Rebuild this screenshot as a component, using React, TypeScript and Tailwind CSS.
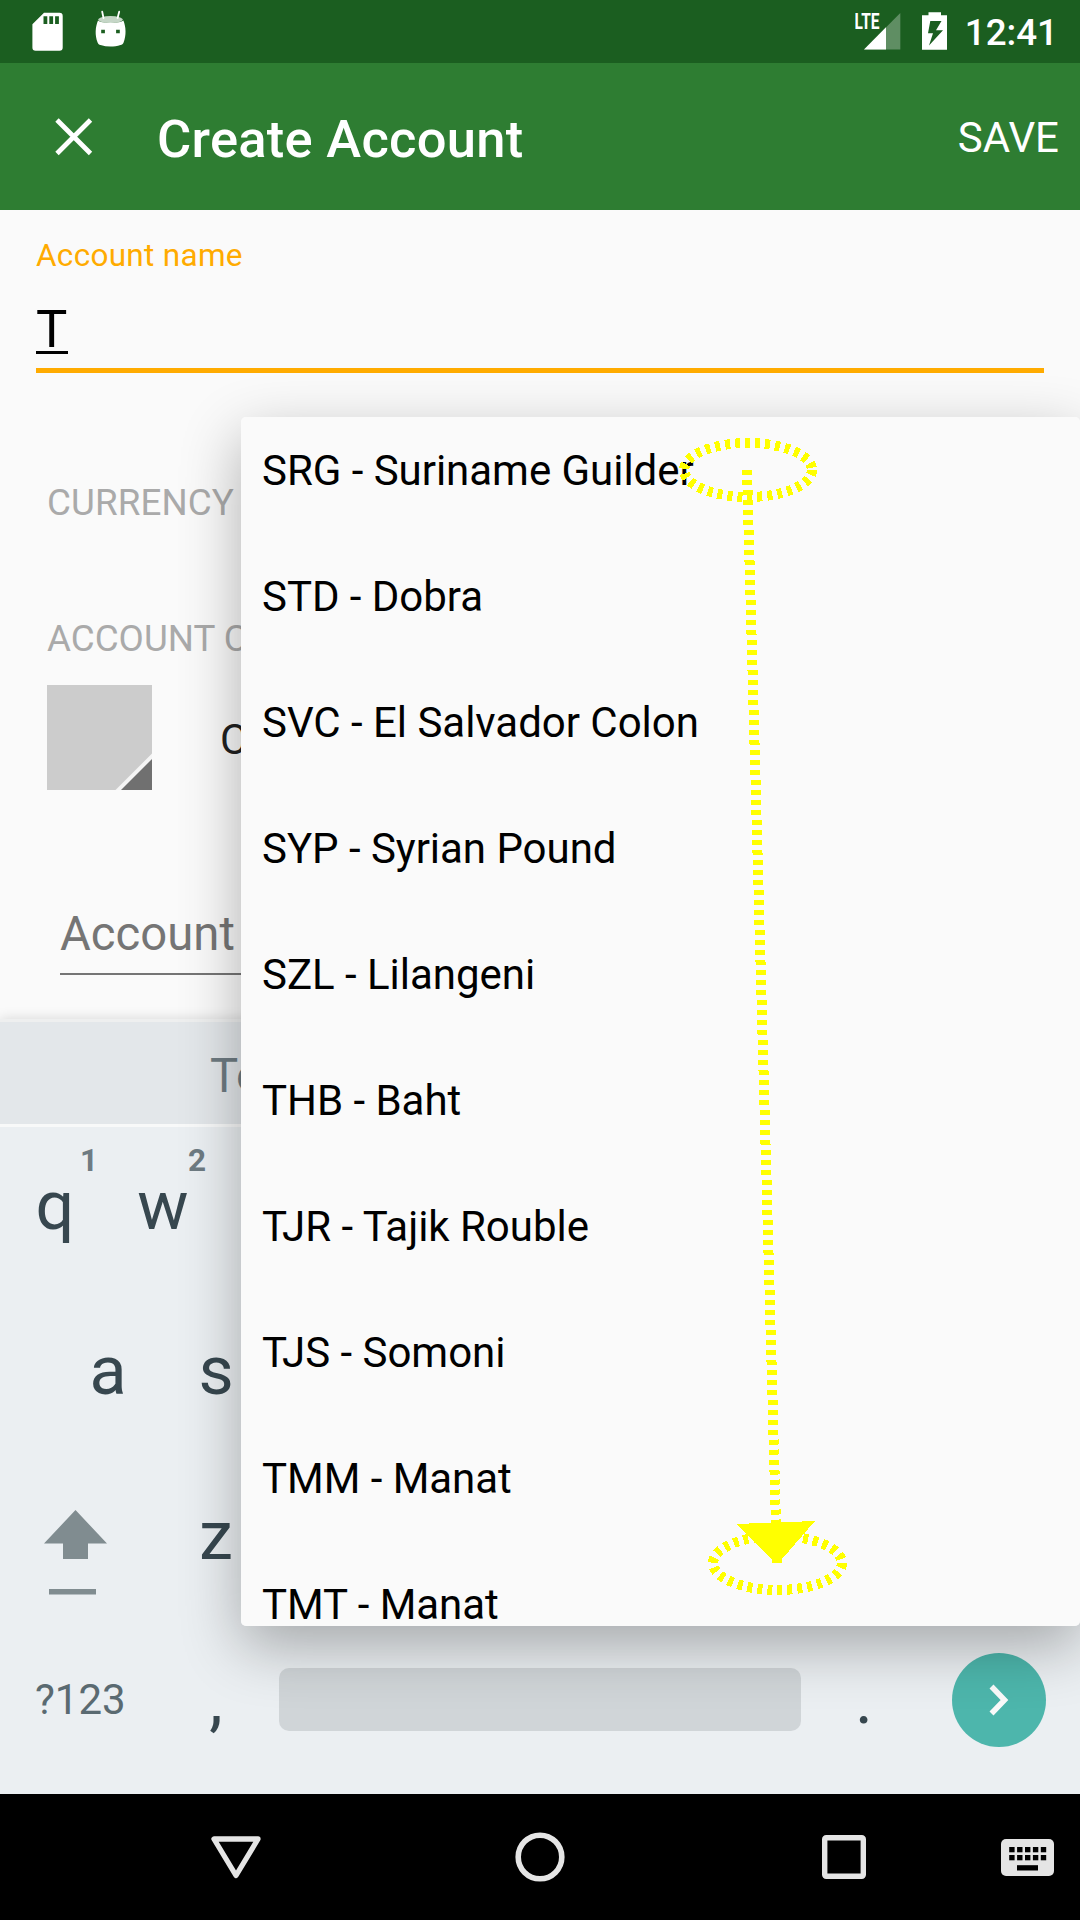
import React from "react";

const currencies = [
  "SRG - Suriname Guilder",
  "STD - Dobra",
  "SVC - El Salvador Colon",
  "SYP - Syrian Pound",
  "SZL - Lilangeni",
  "THB - Baht",
  "TJR - Tajik Rouble",
  "TJS - Somoni",
  "TMM - Manat",
  "TMT - Manat",
];

function StatusBar() {
  return (
    <div className="flex h-[63px] shrink-0 items-center bg-[#1b5e20] pl-8 pr-[22px] text-white">
      <svg className="h-[63px] w-[32px]" viewBox="32 0 32 63" fill="currentColor">
        <path
          fillRule="evenodd"
          d="M44 12.700H59.500a3.200 3.200 0 0 1 3.200 3.200V47.500a3.200 3.200 0 0 1-3.200 3.200H35.600a3.200 3.200 0 0 1-3.200-3.200V24.200ZM43.500 16.300V24h3.800V16.300ZM49.300 16.300V24h3.800V16.300ZM55.100 16.300V24h3.800V16.300Z"
        />
      </svg>
      <svg className="ml-[30px] h-[63px] w-[34px]" viewBox="94 0 34 63" fill="currentColor">
        <path d="M102.200 11.700 103.500 18M119.200 11.700 117.600 18" stroke="currentColor" strokeWidth="1.800" strokeLinecap="round" />
        <path fillRule="evenodd" d="M98 20.500C101 23.600 120 23.600 123.400 20.500C126 27 126.500 35 123.600 42.500C123 44 122 44.700 120.500 45C114 47 107 47 100.500 45C99 44.700 98.200 44 97.600 42.500C94.700 35 95.300 27 98 20.500ZM101.200 29.800V33.200H104.900V29.800ZM116.100 29.800V33.200H119.800V29.800Z" />
        <ellipse cx="110.500" cy="19.600" rx="12.300" ry="3.500" opacity=".75" />
      </svg>
      <svg className="ml-auto h-[63px] w-[46px]" viewBox="855 0 46 63" fill="currentColor">
        <path d="M864 49.500 900.300 13V49.500Z" opacity=".3" />
        <path d="M864 49.500 886 27.300V49.500Z" />
        <text x="854.500" y="29" fontFamily="Roboto" fontWeight="700" fontSize="21.500" textLength="25" lengthAdjust="spacingAndGlyphs">LTE</text>
      </svg>
      <svg className="ml-[20px] h-[63px] w-[27px]" viewBox="921 0 27 63" fill="currentColor">
        <path fillRule="evenodd" d="M928.500 12.200H941V15.200H947V49.700H922V15.200H928.500ZM930.300 21 928 33.300H933L929 45.500 943 30.300H936L941.500 21Z" />
      </svg>
      <span className="ml-[17px] pt-0.5 text-[36.75px] font-medium leading-[63px]">12:41</span>
    </div>
  );
}

function AppBar() {
  return (
    <div className="flex h-[147px] shrink-0 items-center bg-[#2e7d32] pl-[55px] pr-[21px] text-white">
      <svg className="h-[38px] w-[38px]" viewBox="0 0 38 38" stroke="currentColor" strokeWidth="4.800">
        <path d="M2 2 35.500 35.500M35.500 2 2 35.500" />
      </svg>
      <h1 className="ml-[64px] pt-1 text-[52.5px] font-medium leading-[60px] tracking-[0.27px]">Create Account</h1>
      <span className="ml-auto pt-0.5 text-[42px] leading-[60px]">SAVE</span>
    </div>
  );
}

function AccountForm() {
  return (
    <div className="flex h-[809px] shrink-0 flex-col bg-[#fafafa] pt-[26px]">
      <label className="ml-[36px] text-[31.5px] leading-10 tracking-[0.3px] text-[#ffab00]">Account name</label>
      <div className="mx-[36px] mt-[23px] flex h-[74px] border-b-[5px] border-[#ffab00]">
        <span className="h-[55px] w-8 border-b-[3px] border-black text-[52.5px] leading-[60px] text-black">T</span>
      </div>
      <div className="mt-[110px] pl-[47px] text-[36.75px] leading-10 tracking-[0.1px] text-[#aaaaaa]">CURRENCY</div>
      <div className="mt-24 pl-[47px] text-[36.75px] leading-10 text-[#aaaaaa]">ACCOUNT COLOR</div>
      <div className="mt-[26px] flex items-center pl-[47px]">
        <svg className="h-[105px] w-[105px]" viewBox="0 0 105 105">
          <path d="M0 0H105V105H0Z" fill="#cccccc" />
          <path d="M68.500 105 105 68.500V105Z" fill="#f5f5f5" />
          <path d="M74 105 105 74V105Z" fill="#707070" />
        </svg>
        <span className="ml-[68px] pt-[5px] text-[42px] leading-[60px] text-[#212121]">CASH</span>
      </div>
      <div className="ml-[60px] mt-[114px] h-[71px] border-b-2 border-[#757575] text-[47.25px] leading-[60px] text-[#757575]">
        Account
      </div>
    </div>
  );
}

function Key({ label, hint }: { label: string; hint?: string }) {
  return (
    <div className="relative w-[108px] text-center text-[68.25px] leading-[80px] text-[#37474f]">
      {label}
      {hint && (
        <span className="absolute -top-[25px] right-[11px] text-[31.5px] font-bold leading-10 text-[#6e7b82]">{hint}</span>
      )}
    </div>
  );
}

function Keyboard() {
  return (
    <div className="relative flex h-[775px] shrink-0 flex-col bg-[#ebeff2] shadow-[0_0_12px_rgba(0,0,0,0.15)]">
      <div className="h-[108px] border-b-[3px] border-t-[3px] border-b-[#f8f9f9] border-t-[#eeefef] bg-[#e3e7ea] pl-[210px] pt-[24px] text-[47.25px] leading-[60px] text-[#6e7b82]">
        To
      </div>
      <div className="mt-[39px] flex pl-px">
        <Key label="q" hint="1" />
        <Key label="w" hint="2" />
      </div>
      <div className="mt-[85px] flex pl-[54px]">
        <Key label="a" />
        <Key label="s" />
      </div>
      <div className="mt-[85px] flex h-20">
        <div className="w-[162px]">
          <svg className="ml-[44px] mt-[14px] h-[86px] w-[64px]" viewBox="44 1510 64 86" fill="#808c90">
            <path d="M75.500 1510 107 1543.500H88V1559H63V1543.500H44ZM49 1589H96V1594.500H49Z" />
          </svg>
        </div>
        <Key label="z" />
      </div>
      <div className="mt-[76px] flex h-[95px] items-center">
        <span className="w-[162px] pl-[35px] text-[42px] leading-[60px] text-[#5a6a71]">?123</span>
        <Key label="," />
        <div className="ml-[9px] h-[63px] w-[522px] rounded-[10px] bg-[#d0d5d8]" />
        <div className="ml-[9px]">
          <Key label="." />
        </div>
        <div className="ml-[34px] flex size-[94px] items-center justify-center rounded-full bg-[#4db6ac]">
          <svg className="h-8 w-5" viewBox="0 0 20 32" fill="none" stroke="#fafafa" strokeWidth="5.500">
            <path d="M2.500 2.500 15.500 16 2.500 29.500" />
          </svg>
        </div>
      </div>
    </div>
  );
}

function NavigationBar() {
  return (
    <div className="relative h-[126px] shrink-0 bg-black">
      <svg className="h-full w-full" viewBox="0 1794 1080 126" fill="none" stroke="#e5e5e5">
        <path d="M214 1839H258L236 1875.500Z" strokeWidth="5.300" strokeLinejoin="round" />
        <circle cx="540" cy="1857" r="21.800" strokeWidth="5.600" />
        <rect x="824.700" y="1837.700" width="38.600" height="38.600" rx="1.500" strokeWidth="5.400" />
        <rect x="1001" y="1839" width="53" height="37" rx="5" fill="#e5e5e5" stroke="none" />
        {[0, 1, 2, 3, 4].map((column) => (
          <g key={column} fill="black" stroke="none">
            <rect x={1009.2 + column * 7.9} y="1847" width="5.400" height="5.300" />
            <rect x={1009.2 + column * 7.9} y="1855" width="5.400" height="5.300" />
          </g>
        ))}
        <rect x="1017" y="1865.200" width="21" height="5.300" fill="black" stroke="none" />
      </svg>
    </div>
  );
}

function CurrencyMenu() {
  return (
    <div className="absolute left-[241px] top-[417px] h-[1209px] w-[839px] rounded-[5px] shadow-[0_20px_60px_rgba(0,0,0,0.3)]">
      <ul className="h-full overflow-hidden rounded-[5px] bg-[#fafafa]">
        {currencies.map((name) => (
          <li key={name} className="relative -top-[9px] h-[126px] pl-[21px] text-[42px] leading-[126px] tracking-[-0.03px] text-black">
            {name}
          </li>
        ))}
      </ul>
    </div>
  );
}

function SwipeGesture() {
  return (
    <svg
      className="pointer-events-none absolute left-[670px] top-[430px] h-[1180px] w-[190px]"
      viewBox="670 430 190 1180"
      fill="none"
      stroke="#ffff00"
      strokeWidth="10"
      shapeRendering="crispEdges"
    >
      <ellipse cx="748" cy="470" rx="64" ry="27" strokeDasharray="5 5" />
      <path d="M747 470 777 1562" strokeDasharray="5 5" />
      <ellipse cx="777.500" cy="1563" rx="64.500" ry="27" strokeDasharray="5 5" />
      <path d="M736 1524 815 1521 782 1559V1563H772V1559Z" fill="#ffff00" stroke="none" />
    </svg>
  );
}

export default function App() {
  return (
    <div className="relative flex h-[1920px] w-[1080px] flex-col overflow-hidden bg-[#fafafa] font-['Roboto',sans-serif]">
      <StatusBar />
      <AppBar />
      <AccountForm />
      <Keyboard />
      <NavigationBar />
      <CurrencyMenu />
      <SwipeGesture />
    </div>
  );
}
